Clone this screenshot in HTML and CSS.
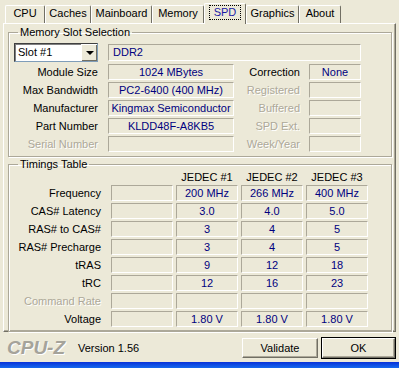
FILE: index.html
```html
<!DOCTYPE html>
<html lang="en">
<head>
	<meta charset="UTF-8">
	<title>CPU-Z SPD</title>
	<link rel="stylesheet" href="styles.css">
</head>
<body>
	<div class="win">
		<ul class="tabs">
			<li>CPU</li>
			<li>Caches</li>
			<li>Mainboard</li>
			<li>Memory</li>
			<li class="on"><span>SPD</span></li>
			<li>Graphics</li>
			<li>About</li>
		</ul>
		<div class="panel">
			<fieldset class="group">
				<legend>Memory Slot Selection</legend>
				<div class="slotGrid">
					<div class="combo"><span>Slot #1</span><b class="drop"></b></div>
					<div class="field wide left">DDR2</div>

					<label>Module Size</label>
					<div class="field">1024 MBytes</div>
					<label>Correction</label>
					<div class="field">None</div>

					<label>Max Bandwidth</label>
					<div class="field">PC2-6400 (400 MHz)</div>
					<label class="off">Registered</label>
					<div class="field"></div>

					<label>Manufacturer</label>
					<div class="field">Kingmax Semiconductor</div>
					<label class="off">Buffered</label>
					<div class="field"></div>

					<label>Part Number</label>
					<div class="field">KLDD48F-A8KB5</div>
					<label class="off">SPD Ext.</label>
					<div class="field"></div>

					<label class="off">Serial Number</label>
					<div class="field"></div>
					<label class="off">Week/Year</label>
					<div class="field"></div>
				</div>
			</fieldset>

			<fieldset class="group timings">
				<legend>Timings Table</legend>
				<div class="timeGrid">
					<span></span><span></span>
					<span class="head">JEDEC #1</span>
					<span class="head">JEDEC #2</span>
					<span class="head">JEDEC #3</span>

					<label>Frequency</label>
					<div class="field"></div><div class="field">200 MHz</div><div class="field">266 MHz</div><div class="field">400 MHz</div>

					<label>CAS# Latency</label>
					<div class="field"></div><div class="field">3.0</div><div class="field">4.0</div><div class="field">5.0</div>

					<label>RAS# to CAS#</label>
					<div class="field"></div><div class="field">3</div><div class="field">4</div><div class="field">5</div>

					<label>RAS# Precharge</label>
					<div class="field"></div><div class="field">3</div><div class="field">4</div><div class="field">5</div>

					<label>tRAS</label>
					<div class="field"></div><div class="field">9</div><div class="field">12</div><div class="field">18</div>

					<label>tRC</label>
					<div class="field"></div><div class="field">12</div><div class="field">16</div><div class="field">23</div>

					<label class="off">Command Rate</label>
					<div class="field"></div><div class="field"></div><div class="field"></div><div class="field"></div>

					<label>Voltage</label>
					<div class="field"></div><div class="field">1.80 V</div><div class="field">1.80 V</div><div class="field">1.80 V</div>
				</div>
			</fieldset>
		</div>

		<div class="footer">
			<span class="logo">CPU-Z</span>
			<span class="version">Version 1.56</span>
			<button class="btn validate">Validate</button>
			<button class="btn ok">OK</button>
		</div>
		<div class="frame"></div>
	</div>
</body>
</html>
```

FILE: styles.css
```css
*{
	margin: 0;
	padding: 0;
	box-sizing: border-box;
}
body{
	background: #ece9d8;
	font-family: "Liberation Sans", Arial, sans-serif;
	font-size: 11px;
	color: #000;
}
.win{
	width: 399px;
	height: 368px;
	display: flex;
	flex-direction: column;
}
.tabs{
	list-style: none;
	display: grid;
	grid-template-columns: 40px 46px 61px 52px 42px 53px 42px;
	padding: 2px 0 0 5px;
	height: 23px;
	align-items: end;
}
.tabs li{
	height: 18px;
	line-height: 15px;
	text-align: center;
	border-top: 1px solid #fff;
	border-left: 1px solid #fff;
	border-right: 1px solid #716f64;
	border-radius: 2px 2px 0 0;
}
.tabs li.on{
	height: 21px;
	margin-bottom: -1px;
	background: #ece9d8;
	position: relative;
	padding-top: 1px;
}
.tabs li.on span{
	display: inline-block;
	padding: 0 4px;
	line-height: 13px;
	border: 1px dotted #000;
	color: #1a1aa6;
}
.panel{
	margin: 0 3px 0 3px;
	height: 309px;
	border-top: 1px solid #fff;
	border-left: 1px solid #fff;
	border-right: 1px solid #716f64;
	border-bottom: 1px solid #716f64;
	box-shadow: inset -1px -1px #aca899;
	padding: 2px 0 0 4px;
}
.group{
	width: 384px;
	border: 1px solid #aca899;
	box-shadow: inset 1px 1px #fff, 1px 1px #fff;
	padding: 4px 5px 4px 5px;
}
.group legend{
	margin-left: 4px;
	padding: 0 2px;
	line-height: 13px;
}
.timings{
	margin-top: 1px;
	padding-top: 0;
}
label{
	text-align: right;
	padding-right: 10px;
	white-space: nowrap;
	line-height: 16px;
}
label.off{
	color: #aca899;
	text-shadow: 1px 1px #fff;
}
.field{
	height: 16px;
	line-height: 14px;
	border-top: 1px solid #aca899;
	border-left: 1px solid #aca899;
	border-right: 1px solid #fff;
	border-bottom: 1px solid #fff;
	color: #00007f;
	text-align: center;
	white-space: nowrap;
	overflow: hidden;
}
.field.left{
	text-align: left;
	padding-left: 4px;
}
.slotGrid{
	display: grid;
	grid-template-columns: 94px 126px 75px 52px;
	grid-template-rows: 19px;
	grid-auto-rows: 16px;
	row-gap: 2px;
	align-items: center;
}
.slotGrid label:nth-of-type(even){
	padding-right: 9px;
}
.field.wide{
	grid-column: 2 / 5;
	height: 17px;
	line-height: 15px;
}
.combo{
	margin-right: 10px;
	height: 19px;
	display: flex;
	background: #fff;
	border: 1px solid #7f9db9;
	border-top-color: #404040;
	border-left-color: #404040;
	box-shadow: inset 1px 1px #808080;
}
.combo span{
	flex: 1;
	line-height: 16px;
	padding-left: 3px;
}
.drop{
	width: 16px;
	background: #ece9d8;
	border-left: 1px solid #fff;
	border-top: 1px solid #fff;
	box-shadow: inset -1px -1px #716f64;
	display: flex;
	align-items: center;
	justify-content: center;
}
.drop::after{
	content: "";
	border-left: 4px solid transparent;
	border-right: 4px solid transparent;
	border-top: 4px solid #000;
}
.timeGrid{
	display: grid;
	grid-template-columns: 94px 62px 62px 62px 62px;
	column-gap: 3px;
	grid-template-rows: 12px;
	grid-auto-rows: 16px;
	row-gap: 2px;
	align-items: center;
}
.timeGrid label{
	margin-right: -3px;
}
.head{
	text-align: center;
	line-height: 12px;
}
.footer{
	flex: 1;
	display: flex;
	align-items: center;
	padding: 2px 4px 0 7px;
}
.logo{
	font-size: 19px;
	font-weight: bold;
	font-style: italic;
	color: #a5a39a;
	text-shadow: 1px 1px #fff;
	width: 71px;
}
.version{
	flex: 1;
}
.btn{
	font-family: inherit;
	font-size: 11px;
	height: 20px;
	background: #ece9d8;
	border: 1px solid;
	border-color: #fff #716f64 #716f64 #fff;
	box-shadow: inset -1px -1px #aca899;
}
.validate{
	width: 76px;
	margin-right: 4px;
}
.ok{
	width: 73px;
	outline: 1px solid #000;
}
.frame{
	height: 6px;
	background: linear-gradient(#0831d9, #166aee);
}
```
